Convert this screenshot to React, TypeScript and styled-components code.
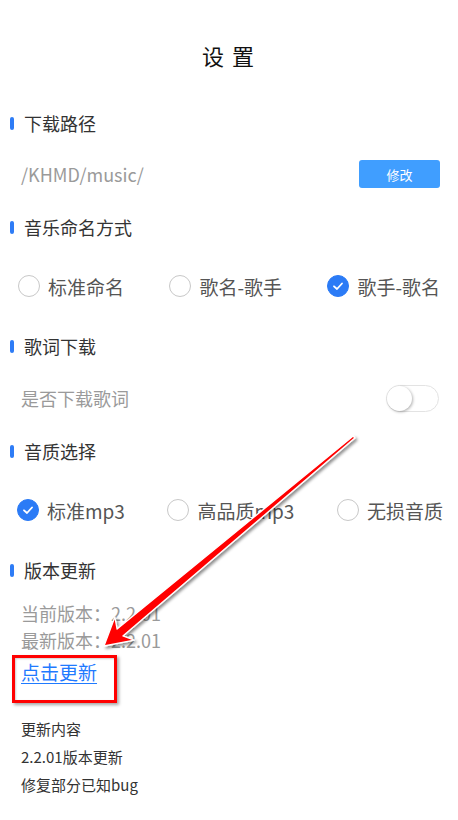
import styled, { createGlobalStyle } from 'styled-components'

const GlobalStyle = createGlobalStyle`
    html, body {
        margin: 0;
        padding: 0;
        background: #ffffff;
    }
    body {
        font-family: "Noto Sans CJK SC", "Noto Sans", sans-serif;
        color: #333333;
    }
`;

const Page = styled.div`
    position: relative;
    width: 458px;
    height: 820px;
    overflow: hidden;
    background: #ffffff;
`;

const Title = styled.div`
    height: 110px;
    display: flex;
    align-items: center;
    justify-content: center;
    font-size: 22px;
    letter-spacing: 8px;
    padding-left: 6px;
    color: #111111;
`;

const Header = styled.div`
    height: 26px;
    display: flex;
    align-items: center;
    gap: 10px;
    padding-left: 10px;
    font-size: 18px;
    color: #333333;

    &::before {
        content: '';
        width: 4px;
        height: 13px;
        border-radius: 2px;
        background: #2e7cf6;
    }
`;

const Row = styled.div<{ $h: number; $top: number; $bottom: number; $right?: number; $left?: number }>`
    height: ${p => p.$h}px;
    margin: ${p => p.$top}px 0 ${p => p.$bottom}px;
    padding: 0 ${p => p.$right ?? 18}px 0 ${p => p.$left ?? 21}px;
    display: flex;
    align-items: center;
    justify-content: space-between;
`;

const Muted = styled.span`
    font-size: 18px;
    color: #9a9a9a;
`;

const EditButton = styled.button`
    width: 81px;
    height: 28px;
    border: none;
    border-radius: 3px;
    background: #409eff;
    color: #ffffff;
    font-family: inherit;
    font-size: 13px;
    padding: 0;
`;

const Option = styled.label`
    display: flex;
    align-items: center;
    gap: 8px;
    font-size: 19px;
    color: #555555;
`;

const Circle = styled.span<{ $on?: boolean }>`
    width: 22px;
    height: 22px;
    box-sizing: border-box;
    border-radius: 50%;
    border: 1px solid ${p => (p.$on ? '#2b7bf6' : '#c8c8c8')};
    background: ${p => (p.$on ? '#2b7bf6' : '#ffffff')};
    display: flex;
    align-items: center;
    justify-content: center;
`;

const Switch = styled.span`
    width: 53px;
    height: 27px;
    box-sizing: border-box;
    border: 1px solid #e3e3e3;
    border-radius: 14px;
    background: #ffffff;
    display: flex;
    align-items: center;

    &::after {
        content: '';
        width: 25px;
        height: 25px;
        border-radius: 50%;
        background: #ffffff;
        box-shadow: 1px 1px 3px rgba(0, 0, 0, 0.3);
    }
`;

const Versions = styled.div`
    margin-top: 17px;
    padding-left: 21px;
    font-size: 18px;
    line-height: 27px;
    color: #9a9a9a;
`;

const UpdateLink = styled.a`
    display: block;
    margin-top: 4px;
    padding-left: 21px;
    width: max-content;
    font-size: 19px;
    line-height: 27px;
    color: #1f7aff;
    text-decoration: underline;
    text-underline-offset: 3px;
`;

const Notes = styled.div`
    margin-top: 30px;
    padding-left: 21px;
    font-size: 15px;
    line-height: 28px;
    color: #333333;
`;

const Highlight = styled.div`
    position: absolute;
    left: 12px;
    top: 655px;
    width: 105px;
    height: 48px;
    box-sizing: border-box;
    border: 3px solid #ff0000;
    box-shadow: 2px 2px 3px rgba(0, 0, 0, 0.35), inset 1px 1px 2px rgba(0, 0, 0, 0.2);
`;

const Overlay = styled.svg`
    position: absolute;
    left: 0;
    top: 0;
    pointer-events: none;
`;

const Check = () => (
    <svg width="14" height="14" viewBox="0 0 14 14">
        <path d="M3 7.3 L6 10 L11 4.5" fill="none" stroke="#ffffff" strokeWidth="1.8" strokeLinecap="round" strokeLinejoin="round" />
    </svg>
);

const Radio = ({ on, text }: { on?: boolean; text: string }) => (
    <Option>
        <Circle $on={on}>{on && <Check />}</Circle>
        {text}
    </Option>
);

// 标注用的红色箭头
const Arrow = () => (
    <Overlay width="458" height="820" viewBox="0 0 458 820">
        <defs>
            <filter id="shadow" x="-10%" y="-10%" width="130%" height="130%">
                <feDropShadow dx="2" dy="2" stdDeviation="1.6" floodColor="#000" floodOpacity="0.45" />
            </filter>
        </defs>
        <polygon
            points="104,646 114.9,617.1 117.1,629.1 353.2,436 354.8,438 122.9,635.9 134.3,640.1"
            fill="#ff0000"
            stroke="#ffffff"
            strokeWidth="1.3"
            strokeLinejoin="round"
            filter="url(#shadow)"
        />
    </Overlay>
);

export default function App() {
    return (
        <Page>
            <GlobalStyle />
            <Title>设置</Title>

            <Header>下载路径</Header>
            <Row $h={28} $top={24} $bottom={26}>
                <Muted>/KHMD/music/</Muted>
                <EditButton>修改</EditButton>
            </Row>

            <Header>音乐命名方式</Header>
            <Row $h={30} $top={31} $bottom={32} $left={18}>
                <Radio text="标准命名" />
                <Radio text="歌名-歌手" />
                <Radio on text="歌手-歌名" />
            </Row>

            <Header>歌词下载</Header>
            <Row $h={28} $top={25} $bottom={26} $right={19}>
                <Muted>是否下载歌词</Muted>
                <Switch />
            </Row>

            <Header>音质选择</Header>
            <Row $h={30} $top={31} $bottom={32} $left={17} $right={15}>
                <Radio on text="标准mp3" />
                <Radio text="高品质mp3" />
                <Radio text="无损音质" />
            </Row>

            <Header>版本更新</Header>
            <Versions>
                <div>当前版本：2.2.01</div>
                <div>最新版本：2.2.01</div>
            </Versions>
            <UpdateLink>点击更新</UpdateLink>
            <Notes>
                <div>更新内容</div>
                <div>2.2.01版本更新</div>
                <div>修复部分已知bug</div>
            </Notes>

            <Highlight />
            <Arrow />
        </Page>
    )
};
